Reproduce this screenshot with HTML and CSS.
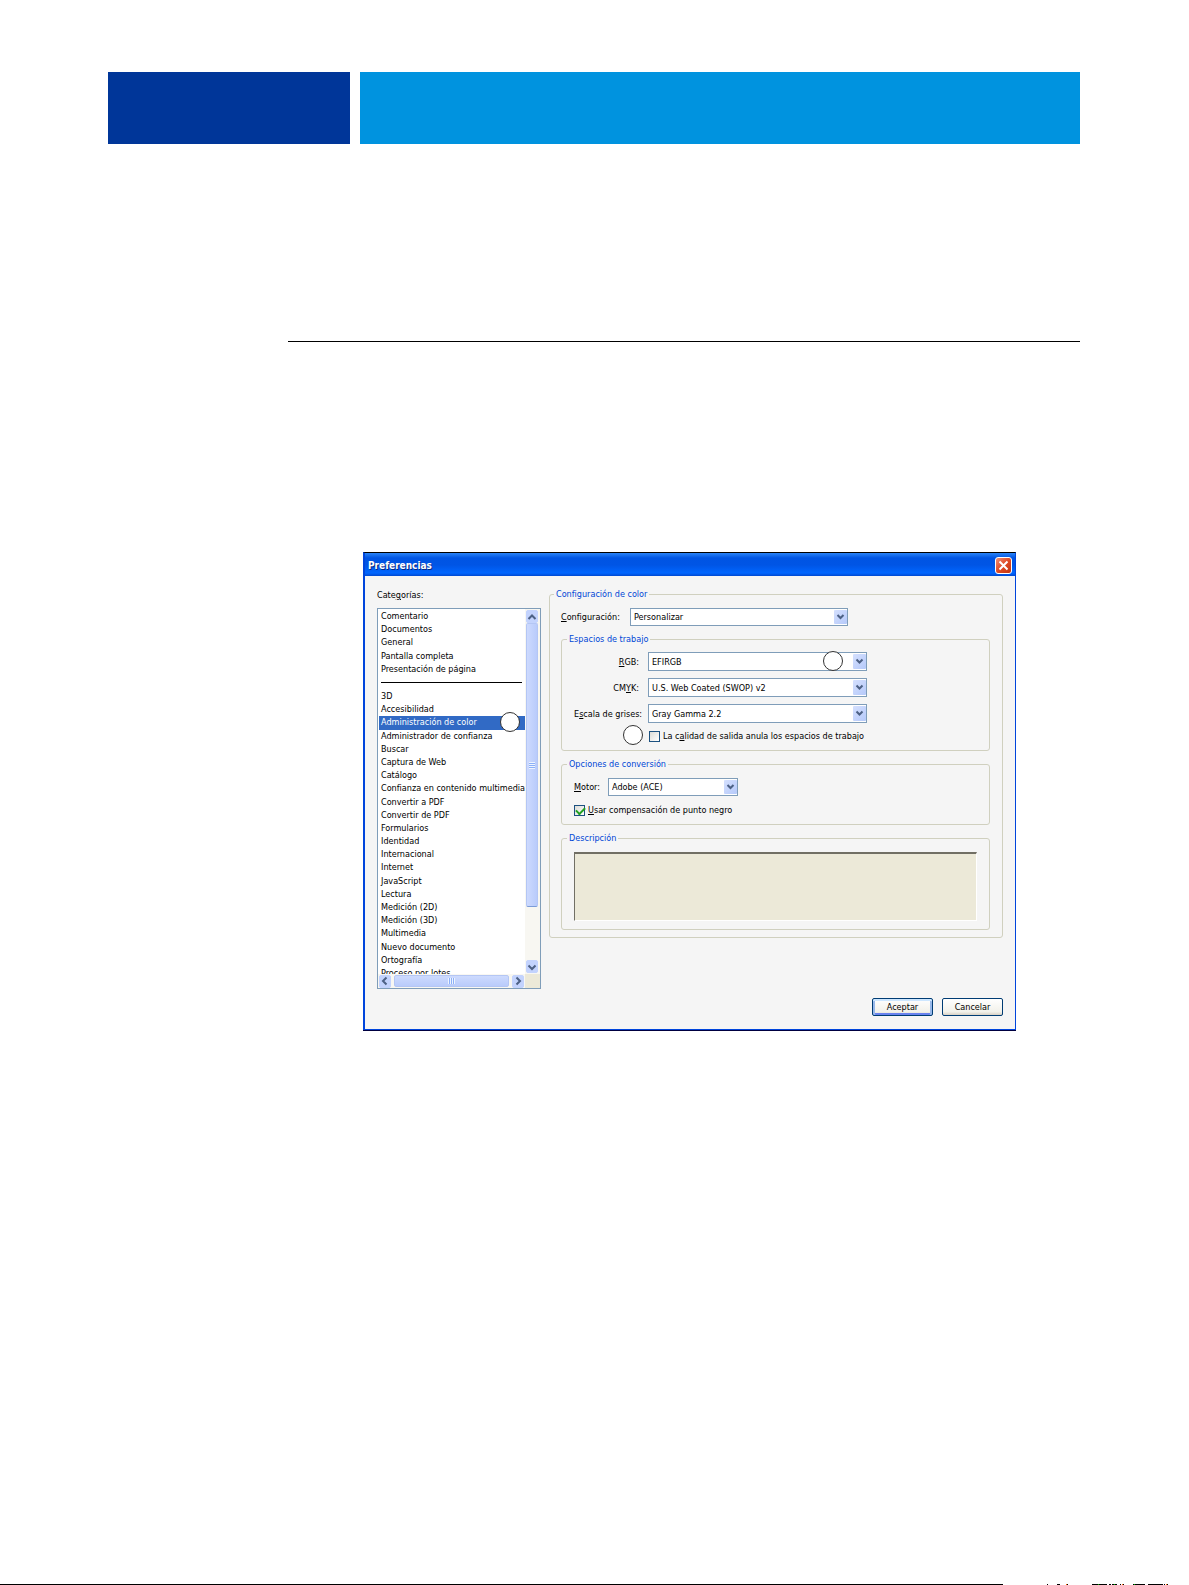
FILE: index.html
```html
<!DOCTYPE html>
<html lang="es">
<head>
<meta charset="utf-8">
<title>Preferencias</title>
<link rel="stylesheet" href="styles.css">
</head>
<body>
<div class="page">
  <header class="banner"><div class="banner-side"></div><div class="banner-main"></div></header>
  <hr class="rule">
  <main class="dialog" role="dialog" aria-labelledby="title">
    <div class="titlebar">
      <h1 id="title">Preferencias</h1>
      <button class="close" type="button" aria-label="Cerrar"><svg width="17" height="17" viewBox="0 0 17 17"><path d="M4.500 4.500l8 8M12.500 4.500l-8 8" stroke="#fff" stroke-width="2"/></svg></button>
    </div>
    <form class="body">
      <div class="columns">
        <section class="categories">
          <h2 class="caption" id="cat">Cate<u>g</u>orías:</h2>
          <div class="listbox">
            <div class="view" role="listbox" aria-labelledby="cat">
              <ul class="group group-top">
                <li>Comentario</li><li>Documentos</li><li>General</li><li>Pantalla completa</li><li>Presentación de página</li>
              </ul>
              <hr class="divider">
              <ul class="group group-rest">
                <li>3D</li><li>Accesibilidad</li><li class="selected">Administración de color<span class="marker marker-list"></span></li><li>Administrador de confianza</li><li>Buscar</li><li>Captura de Web</li><li>Catálogo</li><li>Confianza en contenido multimedia</li><li>Convertir a PDF</li><li>Convertir de PDF</li><li>Formularios</li><li>Identidad</li><li>Internacional</li><li>Internet</li><li>JavaScript</li><li>Lectura</li><li>Medición (2D)</li><li>Medición (3D)</li><li>Multimedia</li><li>Nuevo documento</li><li>Ortografía</li><li>Proceso por lotes</li>
              </ul>
            </div>
            <div class="vbar">
              <button type="button" class="step" aria-label="Arriba"><svg width="12" height="12" viewBox="0 0 12 12"><path d="M2.500 8L6 4.500 9.500 8"/></svg></button>
              <div class="thumb"><span class="grip"></span></div>
              <button type="button" class="step push" aria-label="Abajo"><svg width="12" height="12" viewBox="0 0 12 12"><path d="M2.500 4.500L6 8l3.500-3.500"/></svg></button>
            </div>
            <div class="hbar">
              <button type="button" class="step" aria-label="Izquierda"><svg width="12" height="12" viewBox="0 0 12 12"><path d="M7.500 2.500L4 6l3.500 3.500"/></svg></button>
              <div class="thumb"><span class="grip"></span></div>
              <button type="button" class="step" aria-label="Derecha"><svg width="12" height="12" viewBox="0 0 12 12"><path d="M4.500 2.500L8 6 4.500 9.500"/></svg></button>
            </div>
            <div class="corner"></div>
          </div>
        </section>
        <fieldset class="box outer">
          <legend>Configuración de color</legend>
          <div class="row">
            <label class="wide-label" for="config"><u>C</u>onfiguración:</label>
            <span class="combo combo-config"><select id="config"><option>Personalizar</option></select><svg class="arrow" viewBox="0 0 13 14"><path d="M3.500 5l3 3 3-3"/></svg></span>
          </div>
          <fieldset class="box">
            <legend>Espacios de trabajo</legend>
            <div class="spaces">
              <label for="rgb"><u>R</u>GB:</label>
              <span class="combo"><select id="rgb"><option>EFIRGB</option></select><svg class="arrow" viewBox="0 0 13 14"><path d="M3.500 5l3 3 3-3"/></svg><span class="marker marker-rgb"></span></span>
              <label for="cmyk">CM<u>Y</u>K:</label>
              <span class="combo"><select id="cmyk"><option>U.S. Web Coated (SWOP) v2</option></select><svg class="arrow" viewBox="0 0 13 14"><path d="M3.500 5l3 3 3-3"/></svg></span>
              <label for="gray">E<u>s</u>cala de grises:</label>
              <span class="combo"><select id="gray"><option>Gray Gamma 2.2</option></select><svg class="arrow" viewBox="0 0 13 14"><path d="M3.500 5l3 3 3-3"/></svg></span>
              <div class="check check-output"><span class="marker marker-output"></span><input type="checkbox" id="out"><label for="out">La c<u>a</u>lidad de salida anula los espacios de trabajo</label></div>
            </div>
          </fieldset>
          <fieldset class="box">
            <legend>Opciones de conversión</legend>
            <div class="row">
              <label class="short-label" for="motor"><u>M</u>otor:</label>
              <span class="combo combo-motor"><select id="motor"><option>Adobe (ACE)</option></select><svg class="arrow" viewBox="0 0 13 14"><path d="M3.500 5l3 3 3-3"/></svg></span>
            </div>
            <div class="check check-black"><input type="checkbox" id="black" checked><label for="black"><u>U</u>sar compensación de punto negro</label></div>
          </fieldset>
          <fieldset class="box">
            <legend>Descripción</legend>
            <textarea class="description" aria-label="Descripción" readonly></textarea>
          </fieldset>
        </fieldset>
      </div>
      <div class="actions">
        <button type="button" class="btn default">Aceptar</button>
        <button type="button" class="btn">Cancelar</button>
      </div>
    </form>
  </main>
</div>
<footer class="foot"><span class="foot-line"></span><svg class="foot-ticks" width="186" height="1" viewBox="0 0 186 1"><path d="M44 .5h1M54 .5h3M64 .5h1M89 .5h15M106 .5h2M109 .5h5M117 .5h1M120 .5h1M130 .5h12M145 .5h15M161 .5h1M164 .5h1" stroke="#000"/><path d="M95 .5h1M111 .5h1M131 .5h1" stroke="#0a0"/><path d="M63 .5h1M119 .5h1M163 .5h1" stroke="#f60"/></svg></footer>
</body>
</html>
```
FILE: styles.css
```css
* { box-sizing: border-box; }

body {
  margin: 0;
  min-height: 100vh;
  display: flex;
  flex-direction: column;
  background: #fff;
  color: #000;
  font: 9px/12px "DejaVu Sans Condensed", "Open Sans", sans-serif;
}

h1, h2, ul, fieldset, legend, hr { margin: 0; padding: 0; }
button, select, textarea, input { font: inherit; color: inherit; margin: 0; border-radius: 0; }
u { text-underline-offset: 1px; }

.page { padding: 72px 109px 0 108px; }

.banner { display: flex; gap: 10px; height: 72px; }
.banner-side { width: 242px; background: #003699; }
.banner-main { flex: 1; background: #0093df; }

.rule { margin: 197px 0 210px 180px; border: 0; height: 1px; background: #000; }

/* Dialog window */
.dialog {
  margin: 0 64px 0 255px;
  border: solid #0045dc;
  border-width: 1px 1px 1px 2px;
  border-top-color: #000;
  box-shadow: 0 1px #000040;
  background: #f5f5f5;
}

.titlebar {
  display: flex;
  align-items: center;
  justify-content: space-between;
  height: 23px;
  padding: 2px 3px 0;
  background: linear-gradient(#2a84f6, #0054e3 5px, #0055e5 12px, #0066ff 20px, #0048d0);
}
.titlebar h1 { font-size: 10px; line-height: 14px; color: #fff; text-shadow: 1px 1px #0a2a80; }

.close {
  width: 17px;
  height: 17px;
  padding: 0;
  border: 1px solid #fff;
  border-radius: 3px;
  background: linear-gradient(135deg, #f09078, #e04a24 50%, #c03410);
  display: flex;
  align-items: center;
  justify-content: center;
}
.close svg { flex: none; }

.body { padding: 12px 12px 13px; }
.columns { display: flex; gap: 8px; align-items: flex-start; }

/* Category list */
.categories { width: 164px; }
.caption { font-size: 9px; font-weight: 400; line-height: 14px; margin-bottom: 6px; }

.listbox {
  display: grid;
  grid-template: 365px 14px / 1fr 15px;
  border: 1px solid #7f9db9;
  background: #fff;
}
.view { position: relative; overflow: hidden; padding: 1px 0 0 1px; }
.group { display: grid; grid-auto-rows: 1fr; list-style: none; }
.group-top { height: 66px; }
.group-rest { height: 290px; }
.group li { padding-left: 2px; display: flex; align-items: center; line-height: 13px; white-space: nowrap; }
.divider { border: 0; height: 1px; margin: 6px 3px 7px 2px; background: #000; }
.selected { position: relative; background: #316ac5; color: #fff; }

.step {
  flex: none;
  width: 12px;
  height: 13px;
  padding: 0;
  border: 1px solid #c3d3fd;
  border-radius: 2px;
  background: #c3d3fd;
  display: flex;
  align-items: center;
  justify-content: center;
}
.step svg { flex: none; }
.step path, .arrow path { fill: none; stroke: #4d6185; stroke-width: 2; }

.vbar { display: flex; flex-direction: column; align-items: center; padding: 1px 2px 1px 1px; background: #f8f7f2; }
.vbar .thumb { width: 12px; height: 284px; border: 1px solid #b4c6f4; border-bottom-color: #7c9cd8; background: linear-gradient(90deg, #cddafe, #b9cbfb); }
.push { margin-top: auto; }
.hbar { display: flex; gap: 3px; align-items: center; padding: 0 1px; background: #f8f7f2; }
.hbar .thumb { flex: 1; height: 12px; border: 1px solid #b4c6f4; background: linear-gradient(#cddafe, #b9cbfb); }
.thumb { display: flex; align-items: center; justify-content: center; border-radius: 2px; }
.grip { width: 6px; height: 7px; background: repeating-linear-gradient(#eef4fe 0 1px, #8cb0f8 1px 2px); }
.hbar .grip { width: 7px; height: 6px; background: repeating-linear-gradient(90deg, #eef4fe 0 1px, #8cb0f8 1px 2px); }
.corner { background: #ece9d8; }

/* Group boxes */
.box {
  min-width: 0;
  margin-top: 7px;
  padding: 8px 12px;
  border: 1px solid #d0d0bf;
  border-radius: 3px;
}
.outer { flex: 1; margin: 0; padding: 8px 12px 7px 11px; }
legend { margin-left: -7px; padding: 0 2px; color: #0046d5; }

.row { display: flex; align-items: center; }
.wide-label { width: 69px; }
.short-label { width: 34px; }

.spaces {
  display: grid;
  grid-template-columns: 65px 219px;
  gap: 7px 9px;
  align-items: center;
  margin-top: -1px;
  white-space: nowrap;
}
.spaces > label { text-align: right; }

.combo { position: relative; display: block; height: 18px; }
.combo select {
  display: block;
  appearance: none;
  width: 100%;
  height: 100%;
  padding: 0 18px 0 3px;
  border: 1px solid #7f9db9;
  background: #fff;
}
.spaces .combo { height: 19px; }
.combo-config { width: 218px; }
.combo-motor { width: 130px; }
.arrow {
  position: absolute;
  top: 2px;
  right: 1px;
  width: 13px;
  height: calc(100% - 4px);
  border-radius: 1px;
  background: linear-gradient(135deg, #d5e0fe, #b5c9fa);
  pointer-events: none;
}

.check { position: relative; display: flex; align-items: center; gap: 3px; height: 12px; }
.check-output { grid-column: 1 / -1; padding-left: 75px; }
.check-black { margin-top: 8px; }
.check input {
  appearance: none;
  width: 11px;
  height: 11px;
  border: 1px solid #1c5180;
  background: linear-gradient(135deg, #dcdcd7, #fff);
}
.check input:checked::after {
  content: "";
  display: block;
  width: 7px;
  height: 4px;
  margin: 1px;
  border: solid #21a121;
  border-width: 0 0 2px 2px;
  rotate: -45deg;
}

.description {
  display: block;
  width: 100%;
  height: 69px;
  border: 1px solid;
  border-top-width: 2px;
  border-color: #716f64 #fff #fff #716f64;
  background: #ece9d8;
  resize: none;
  outline: 0;
}

/* Callout circles over the dialog */
.marker { position: absolute; width: 20px; height: 20px; border: 1px solid #333; border-radius: 50%; background: #fff; }
.marker-list { right: 5px; top: -4px; z-index: 1; }
.marker-rgb { right: 24px; top: -1px; }
.marker-output { left: 49px; top: -5px; }

.actions { display: flex; justify-content: flex-end; gap: 9px; margin-top: 9px; }
.btn {
  width: 61px;
  height: 18px;
  padding: 0;
  border: 1px solid #003c74;
  border-radius: 2px;
  background: linear-gradient(#fff, #f2f1ea 80%, #d8d0c4);
}
.default { box-shadow: inset 0 2px #cee7ff, inset 2px 0 #98b8ea, inset -2px 0 #98b8ea, inset 0 -2px #6982ee; }

.foot { display: flex; height: 1px; margin-top: auto; }
.foot-line { flex: 1; background: #000; }
.foot-ticks { display: block; }
```
